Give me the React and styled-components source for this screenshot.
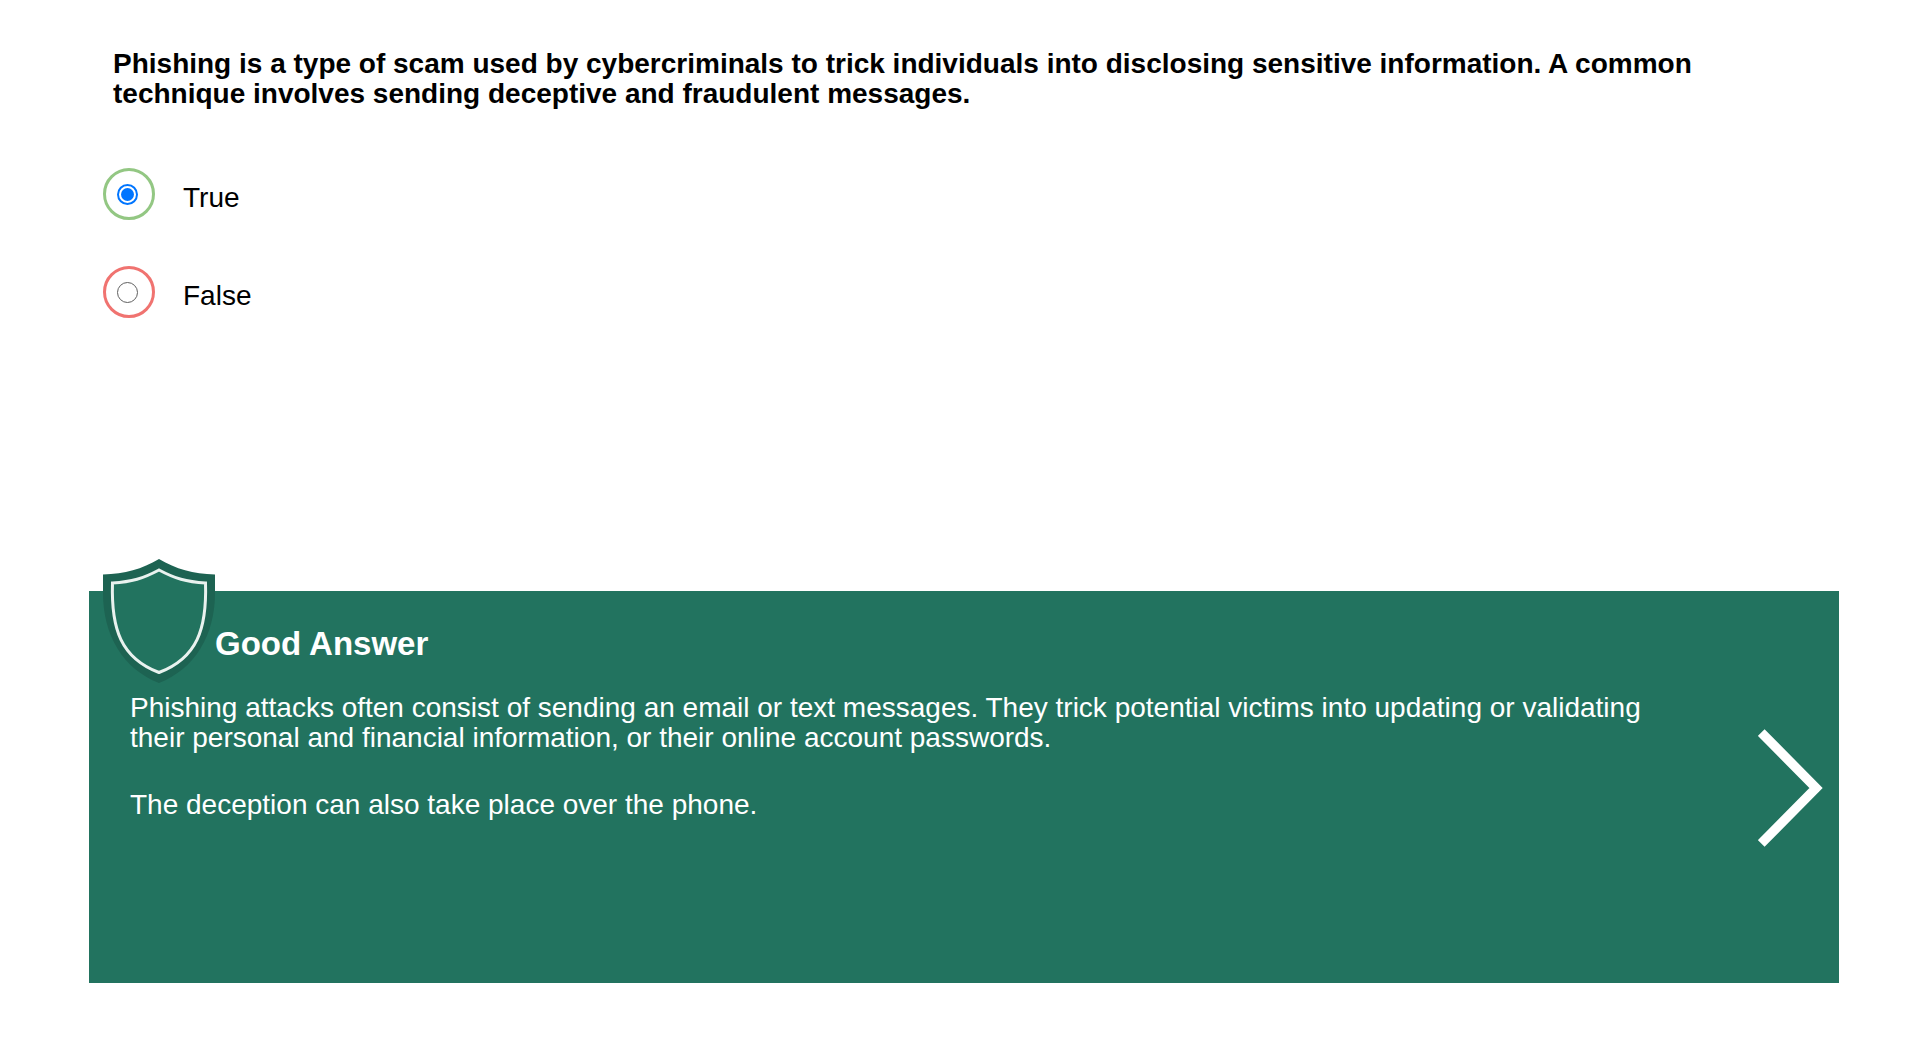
import React, { useState } from "react";
import styled, { createGlobalStyle } from "styled-components";

const GlobalStyle = createGlobalStyle`
  *, *::before, *::after { box-sizing: border-box; }
  body {
    margin: 0;
    background: #fff;
    color: #000;
    font-family: "Liberation Sans", Arial, sans-serif;
    font-size: 28px;
    line-height: 30px;
  }
`;

const Page = styled.main`
  display: flex;
  flex-direction: column;
  min-height: 100vh;
  padding: 49px 70px 59px 89px;
`;

const Quiz = styled.form`
  flex: 1;
  padding: 0 116px 0 14px;
`;

const Question = styled.h1`
  margin: 0 0 59px 10px;
  font-size: 28px;
  line-height: 30px;
  font-weight: 700;
`;

const Options = styled.fieldset`
  display: flex;
  flex-direction: column;
  gap: 46px;
  margin: 0;
  padding: 0;
  border: 0;
`;

const Option = styled.label`
  display: flex;
  gap: 28px;
  width: fit-content;
  cursor: pointer;
`;

const Ring = styled.span`
  display: grid;
  place-content: center;
  width: 52px;
  height: 52px;
  padding-right: 3px;
  border: 3px solid ${(p) => (p.$correct ? "#93c783" : "#f07370")};
  border-radius: 50%;
`;

const Radio = styled.input`
  appearance: none;
  display: grid;
  place-content: center;
  width: 21px;
  height: 21px;
  margin: 0;
  border: 1px solid #5f5f5f;
  border-radius: 50%;
  background: #fff;
  cursor: pointer;

  &:checked {
    border: 2px solid #0075ff;
  }

  &:checked::before {
    content: "";
    width: 13px;
    height: 13px;
    border-radius: 50%;
    background: #0075ff;
  }

  &:focus-visible {
    outline: 2px solid #0075ff;
    outline-offset: 3px;
  }
`;

const OptionText = styled.span`
  padding-top: 15px;
`;

const Feedback = styled.section`
  display: flex;
  justify-content: space-between;
  min-height: 392px;
  padding: 0 15px 0 14px;
  background: #22735f;
  color: #fff;
`;

const Message = styled.div`
  flex: 0 1 1570px;
`;

const FeedbackHeader = styled.header`
  display: flex;
  align-items: center;
  height: 92px;
  margin-bottom: 10px;
`;

const Shield = styled.svg`
  width: 112px;
  height: 124px;
  margin-top: -32px;
  align-self: flex-start;
`;

const FeedbackTitle = styled.h2`
  margin: 14px 0 0;
  font-size: 33px;
  line-height: 36px;
`;

const Paragraph = styled.p`
  margin: 0 16px 37px 27px;
`;

const NextButton = styled.button`
  align-self: center;
  padding: 0;
  border: 0;
  background: none;
  color: inherit;
  cursor: pointer;

  svg { display: block; }
`;

const choices = [
  { value: "true", label: "True", correct: true },
  { value: "false", label: "False", correct: false },
];

export default function App() {
  const [answer, setAnswer] = useState("true");

  return (
    <>
      <GlobalStyle />
      <Page>
        <Quiz>
          <Question id="question">
            Phishing is a type of scam used by cybercriminals to trick
            individuals into disclosing sensitive information. A common
            technique involves sending deceptive and fraudulent messages.
          </Question>
          <Options aria-labelledby="question">
            {choices.map((c) => (
              <Option key={c.value} htmlFor={c.value}>
                <Ring $correct={c.correct}>
                  <Radio
                    type="radio"
                    id={c.value}
                    name="answer"
                    value={c.value}
                    checked={answer === c.value}
                    onChange={() => setAnswer(c.value)}
                  />
                </Ring>
                <OptionText>{c.label}</OptionText>
              </Option>
            ))}
          </Options>
        </Quiz>
        <Feedback>
          <Message>
            <FeedbackHeader>
              <Shield viewBox="0 0 112 124" aria-hidden="true">
                <path
                  d="M56 0C39 10 22 15 0 15.500V34C0 76 20 110 56 124C92 110 112 76 112 34V15.500C90 15 73 10 56 0Z"
                  fill="#1d6352"
                />
                <path
                  d="M56 11C40 19.500 29 23 9.500 24C8 70 18 99 56 113.500C94 99 104 70 102.500 24C83 23 72 19.500 56 11Z"
                  fill="#22735f"
                  stroke="#e9f2ef"
                  strokeWidth="3"
                />
              </Shield>
              <FeedbackTitle>Good Answer</FeedbackTitle>
            </FeedbackHeader>
            <Paragraph>
              Phishing attacks often consist of sending an email or text
              messages. They trick potential victims into updating or
              validating their personal and financial information, or their
              online account passwords.
            </Paragraph>
            <Paragraph>
              The deception can also take place over the phone.
            </Paragraph>
          </Message>
          <NextButton type="button" aria-label="Next">
            <svg width="66" height="120" viewBox="0 0 66 120">
              <path
                d="M3.200 5.500L58 61L3.200 116.500"
                fill="none"
                stroke="currentColor"
                strokeWidth="9.500"
              />
            </svg>
          </NextButton>
        </Feedback>
      </Page>
    </>
  );
}
